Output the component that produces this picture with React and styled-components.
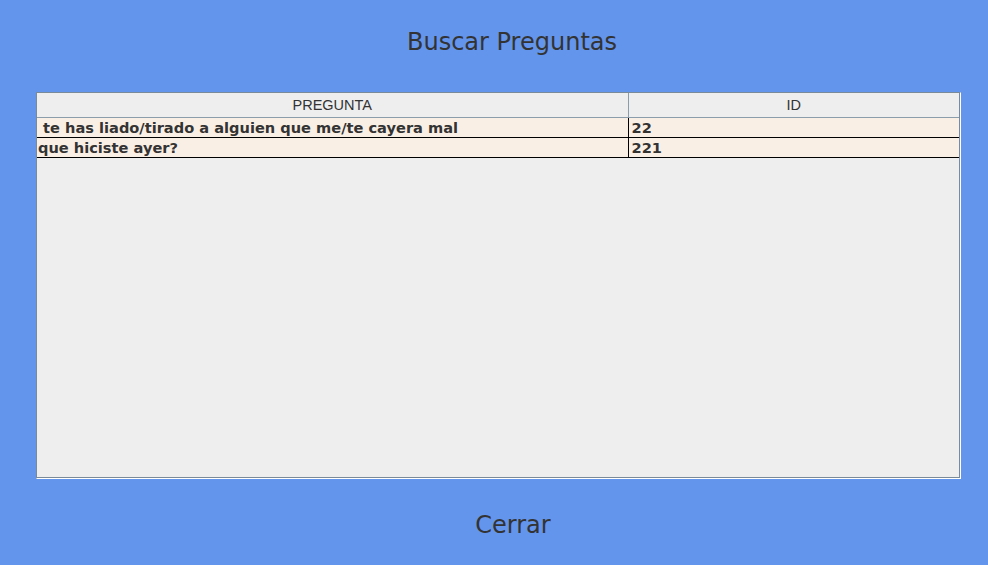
import styled, { createGlobalStyle } from "styled-components";

const GlobalStyle = createGlobalStyle`
  html, body {
    margin: 0;
    padding: 0;
    background: #6495ed;
  }
`;

const Frame = styled.div`
  width: 988px;
  height: 565px;
  background: #6495ed;
  display: flex;
  flex-direction: column;
  font-family: "DejaVu Sans", sans-serif;
  color: #333333;
`;

const Title = styled.div`
  height: 92px;
  display: flex;
  align-items: center;
  justify-content: center;
  padding-left: 36px;
  padding-bottom: 8px;
  font-size: 24px;
  box-sizing: border-box;
`;

const ScrollPane = styled.div`
  margin-left: 36px;
  width: 925px;
  height: 387px;
  box-sizing: border-box;
  background: #eeeeee;
  border-left: 1px solid #7a8a99;
  border-top: 1px solid #7a8a99;
  border-right: 1px solid #ffffff;
  border-bottom: 1px solid #ffffff;
`;

const Viewport = styled.div`
  height: 100%;
  box-sizing: border-box;
  border-right: 1px solid #7a8a99;
  border-bottom: 1px solid #7a8a99;
  overflow: hidden;
`;

const Table = styled.table`
  border-collapse: collapse;
  width: 922px;
  table-layout: fixed;
`;

const HeadCell = styled.th`
  height: 24px;
  padding: 0;
  background: #eeeeee;
  border-bottom: 1px solid #8b9cab;
  border-right: 1px solid #8b9cab;
  font-family: "Liberation Sans", Arial, sans-serif;
  font-weight: normal;
  font-size: 14.5px;
  color: #333333;
  text-align: center;
  &:last-child {
    border-right: none;
  }
`;

const Cell = styled.td`
  height: 19px;
  padding: 1px 0 0 ${p => p.$pad}px;
  background: #faefe5;
  border-bottom: 1px solid #000000;
  border-right: 1px solid #000000;
  font-weight: bold;
  font-size: 14.6px;
  color: #333333;
  white-space: pre;
  overflow: hidden;
  box-sizing: border-box;
  line-height: 18px;
`;

const Footer = styled.div`
  flex: 1;
  display: flex;
  align-items: center;
  justify-content: center;
  padding-left: 38px;
  padding-top: 6px;
  font-size: 24px;
`;

const rows = [
  { pregunta: " te has liado/tirado a alguien que me/te cayera mal", id: "22" },
  { pregunta: "que hiciste ayer?", id: "221" },
];

export default function App() {
  return (
    <Frame>
      <GlobalStyle />
      <Title>Buscar Preguntas</Title>
      <ScrollPane>
        <Viewport>
          <Table>
            <colgroup>
              <col style={{ width: 591 }} />
              <col style={{ width: 331 }} />
            </colgroup>
            <thead>
              <tr>
                <HeadCell>PREGUNTA</HeadCell>
                <HeadCell>ID</HeadCell>
              </tr>
            </thead>
            <tbody>
              {rows.map(r => (
                <tr key={r.id}>
                  <Cell $pad={1}>{r.pregunta}</Cell>
                  <Cell $pad={3}>{r.id}</Cell>
                </tr>
              ))}
            </tbody>
          </Table>
        </Viewport>
      </ScrollPane>
      <Footer>Cerrar</Footer>
    </Frame>
  );
}
